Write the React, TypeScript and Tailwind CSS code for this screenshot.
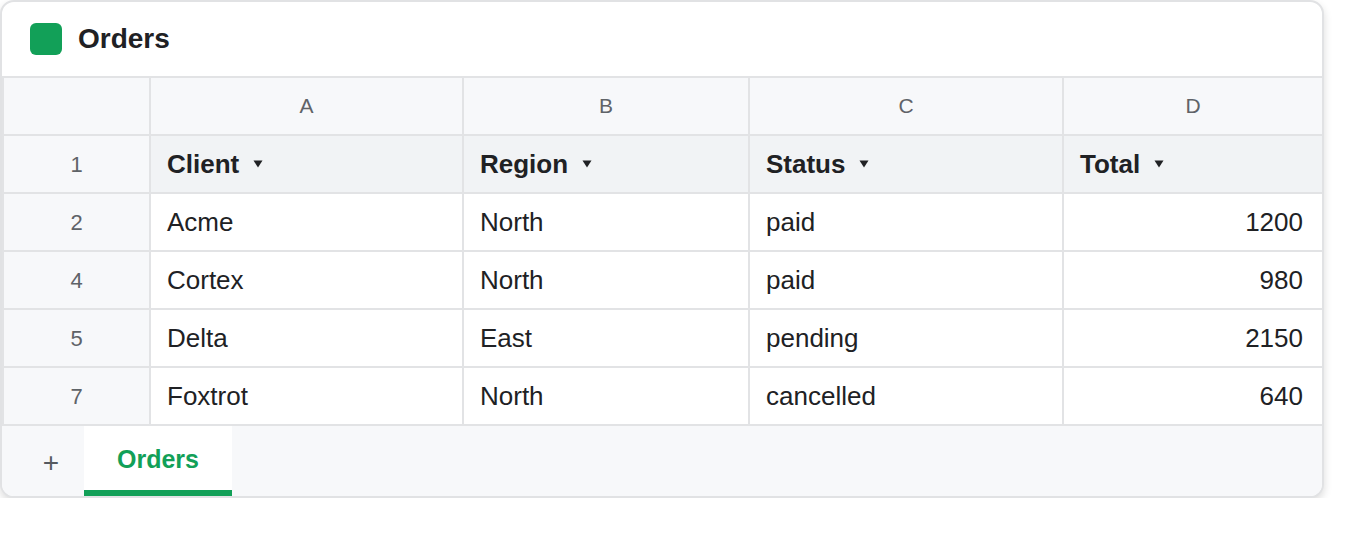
import React from 'react';

const cols = ['A', 'B', 'C', 'D'];
const headers = ['Client', 'Region', 'Status', 'Total'];
const rows = [
  { n: 2, cells: ['Acme', 'North', 'paid', '1200'] },
  { n: 4, cells: ['Cortex', 'North', 'paid', '980'] },
  { n: 5, cells: ['Delta', 'East', 'pending', '2150'] },
  { n: 7, cells: ['Foxtrot', 'North', 'cancelled', '640'] },
];

const Caret = () => (
  <svg width="10" height="8" viewBox="0 0 10 8" className="ml-[14px] shrink-0">
    <path d="M0.5 0.5 H9.5 L5 7.5 Z" fill="#202124" />
  </svg>
);

const App = () => {
  return (
    <div className="font-['Liberation_Sans',Arial,sans-serif] text-[#202124]">
      <div className="w-[1324px] overflow-hidden rounded-[14px] border-2 border-[#e1e2e4] bg-white shadow-[0_4px_8px_rgba(0,0,0,0.14)]">
        <div className="flex h-[74px] items-center gap-4 pl-7">
          <div className="h-8 w-8 rounded-md bg-[#12a058]" />
          <h1 className="text-[28px] font-bold leading-none">Orders</h1>
        </div>

        <div className="grid grid-cols-[147px_313px_286px_314px_260px] border-l-2 border-t-2 border-[#e2e3e5]">
          <div className="h-[58px] border-b-2 border-r-2 border-[#e2e3e5] bg-[#f7f8fa]" />
          {cols.map((c) => (
            <div
              key={c}
              className="flex h-[58px] items-center justify-center border-b-2 border-r-2 border-[#e2e3e5] bg-[#f7f8fa] text-[21px] text-[#5f6368]"
            >
              {c}
            </div>
          ))}

          <div className="flex h-[58px] items-center justify-center border-b-2 border-r-2 border-[#e2e3e5] bg-[#f7f8fa] text-[22px] text-[#5f6368]">
            1
          </div>
          {headers.map((h) => (
            <div
              key={h}
              className="flex h-[58px] items-center border-b-2 border-r-2 border-[#e2e3e5] bg-[#f1f3f5] pl-4 text-[26px] font-bold"
            >
              {h}
              <Caret />
            </div>
          ))}

          {rows.map((r) => (
            <React.Fragment key={r.n}>
              <div className="flex h-[58px] items-center justify-center border-b-2 border-r-2 border-[#e2e3e5] bg-[#f7f8fa] text-[22px] text-[#5f6368]">
                {r.n}
              </div>
              {r.cells.map((v, i) => (
                <div
                  key={i}
                  className={`flex h-[58px] items-center border-b-2 border-r-2 border-[#e2e3e5] pl-4 pr-[19px] pt-px text-[26px] ${
                    i === 3 ? 'justify-end' : ''
                  }`}
                >
                  {v}
                </div>
              ))}
            </React.Fragment>
          ))}
        </div>

        <div className="flex h-[70px] bg-[#f7f8fa]">
          <div className="flex w-[82px] items-center justify-center pl-4 pt-1 text-[28px] text-[#555a60]">+</div>
          <div className="flex w-[148px] items-center justify-center border-b-[6px] border-[#12a058] bg-white pt-1 text-[25px] font-bold text-[#12a058]">
            Orders
          </div>
        </div>
      </div>
    </div>
  );
};

export default App;
